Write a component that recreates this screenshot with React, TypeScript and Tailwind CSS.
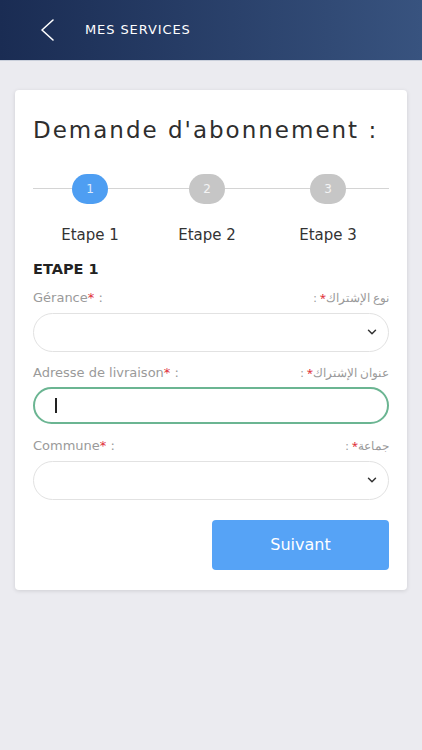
import { ChevronDown } from "lucide-react";

const steps = [
  { n: 1, label: "Etape 1", active: true },
  { n: 2, label: "Etape 2", active: false },
  { n: 3, label: "Etape 3", active: false },
];

const FieldLabel = ({ fr, ar }: { fr: string; ar: string }) => (
  <div className="flex items-center justify-between text-[13px] leading-[18px] text-[#9a9a9a]">
    <span>
      {fr}
      <span className="text-[#e0303a]">*</span> :
    </span>
    <span dir="rtl" className="text-[11.5px] font-['Noto_Sans',sans-serif]">
      {ar}
      <span className="text-[#e0303a]">*</span> :
    </span>
  </div>
);

const SelectBox = () => (
  <div className="mt-[6px] flex h-[39px] items-center justify-end rounded-full border border-[#e2e2e2] pr-[9px]">
    <ChevronDown size={14} strokeWidth={2.5} className="text-[#333]" />
  </div>
);

export default function App() {
  return (
    <div className="min-h-[750px] bg-[#ebebf0] font-['DejaVu_Sans',sans-serif]">
      <header className="flex h-[61px] items-center border-b border-[#c9cfdb] bg-gradient-to-r from-[#1a2c53] to-[#38537f] pl-[40px]">
        <svg width="16" height="24" viewBox="0 0 16 24" fill="none" stroke="white" strokeWidth="1.6" strokeLinecap="round" strokeLinejoin="round">
          <polyline points="13,2 2,12 13,22" />
        </svg>
        <span className="ml-[29px] text-[13px] tracking-[0.9px] text-white">MES SERVICES</span>
      </header>

      <div className="px-[15px] pt-[29px]">
        <div className="rounded-[4px] bg-white px-[18px] pb-[20px] pt-[23px] shadow-[0_1px_4px_rgba(0,0,0,0.12)]">
          <h1 className="text-[23px] tracking-[2px] text-[#2e2e2e]">Demande d'abonnement :</h1>

          <div className="relative mt-[26px]">
            <div className="absolute left-0 right-0 top-[14px] h-px bg-[#d4d4d4]" />
            <div className="relative grid grid-cols-[114px_1fr_122px]">
              {steps.map((s) => (
                <div key={s.n} className="flex flex-col items-center">
                  <div
                    className={`flex h-[30px] w-[36px] items-center justify-center rounded-full text-[12px] text-white/80 ${
                      s.active ? "bg-[#4e9ef2]" : "bg-[#c6c6c6]"
                    }`}
                  >
                    {s.n}
                  </div>
                  <span className="mt-[20px] text-[15px] text-[#333]">{s.label}</span>
                </div>
              ))}
            </div>
          </div>

          <h2 className="mt-[13px] text-[14.5px] font-bold text-[#222]">ETAPE 1</h2>

          <div className="mt-[8px]">
            <FieldLabel fr="Gérance" ar="نوع الإشتراك" />
            <SelectBox />
          </div>

          <div className="mt-[12px]">
            <FieldLabel fr="Adresse de livraison" ar="عنوان الإشتراك" />
            <div className="mt-[5px] flex h-[37px] items-center rounded-full border-2 border-[#6bb592] pl-[20px]">
              <div className="h-[15px] w-[2px] bg-[#222]" />
            </div>
          </div>

          <div className="mt-[13px]">
            <FieldLabel fr="Commune" ar="جماعة" />
            <SelectBox />
          </div>

          <div className="mt-[20px] flex justify-end">
            <button className="h-[50px] w-[177px] rounded-[4px] bg-[#56a3f6] text-[16px] text-white">
              Suivant
            </button>
          </div>
        </div>
      </div>
    </div>
  );
}
